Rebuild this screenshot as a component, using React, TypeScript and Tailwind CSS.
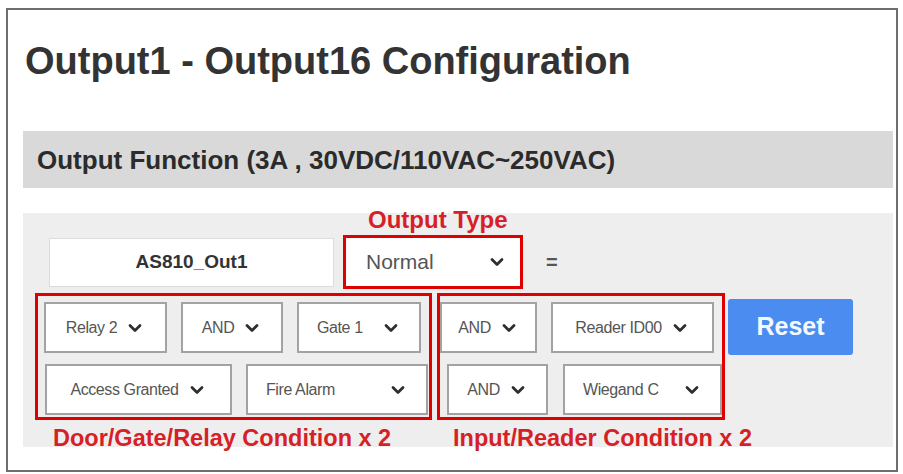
import { ChevronDown } from "lucide-react"

type Opt = { label: string; w: string; spread?: boolean }

const relayTop: Opt[] = [
  { label: "Relay 2", w: "w-[123px]" },
  { label: "AND", w: "w-[102px]" },
  { label: "Gate 1", w: "w-[124px]", spread: true },
]
const relayBottom: Opt[] = [
  { label: "Access Granted", w: "w-[187px]" },
  { label: "Fire Alarm", w: "w-[182px]", spread: true },
]
const readerTop: Opt[] = [
  { label: "AND", w: "w-[97px]" },
  { label: "Reader ID00", w: "w-[163px]" },
]
const readerBottom: Opt[] = [
  { label: "AND", w: "w-[101px]" },
  { label: "Wiegand C", w: "w-[159px]", spread: true },
]

function Caret() {
  return <ChevronDown size={20} strokeWidth={3.3} className="shrink-0 text-[#2e2e2e]" />
}

function Select({ opt }: { opt: Opt }) {
  return (
    <div
      className={`flex h-[51px] items-center border-2 border-[#a2a2a2] bg-white text-[16px] tracking-tight text-[#555] ${opt.w} ${
        opt.spread ? "justify-between px-[18px]" : "justify-center gap-2"
      }`}
    >
      <span className="whitespace-nowrap">{opt.label}</span>
      <Caret />
    </div>
  )
}

function Row({ items, className }: { items: Opt[]; className: string }) {
  return (
    <div className={`flex ${className}`}>
      {items.map((o, i) => (
        <Select key={i} opt={o} />
      ))}
    </div>
  )
}

function Note({ children, className }: { children: string; className: string }) {
  return (
    <span
      className={`absolute whitespace-nowrap leading-none font-bold text-[#d61f26] ${className}`}
    >
      {children}
    </span>
  )
}

export default function App() {
  return (
    <div className="min-h-[474px] bg-white pt-[8px] pl-[6px] font-['Liberation_Sans',Arial,sans-serif]">
      <div className="h-[464px] w-[892px] border-2 border-[#6e6e6e]">
        <h1 className="pt-[32px] pl-[17px] text-[38px] leading-none font-bold text-[#333]">
          Output1 - Output16 Configuration
        </h1>

        <div className="mt-[51px] ml-[15px] flex h-[57px] w-[870px] items-center bg-[#d9d9d9] pl-[14px]">
          <h2 className="text-[26px] leading-none font-bold text-[#2b2b2b]">
            Output Function (3A , 30VDC/110VAC~250VAC)
          </h2>
        </div>

        <div className="mt-[25px] ml-[15px] h-[234px] w-[870px] bg-[#eeeeee] px-3 pt-[22px]">
          {/* name + output type */}
          <div className="ml-[14px] flex items-center">
            <div className="flex h-[49px] w-[285px] items-center justify-center border border-[#dcdcdc] bg-white text-[19px] font-bold text-[#333]">
              AS810_Out1
            </div>
            <div className="relative ml-[9px] flex h-[54px] w-[180px] items-center justify-between border-[3px] border-[#e00000] bg-white pr-[13px] pl-[20px] text-[21px] text-[#555]">
              <Note className="bottom-full left-[22px] mb-[6px] text-[24px]">Output Type</Note>
              <span>Normal</span>
              <Caret />
            </div>
            <span className="ml-[23px] text-[20px] font-bold text-[#555]">=</span>
          </div>

          {/* conditions */}
          <div className="mt-[4px] flex items-start">
            <div className="relative h-[127px] w-[397px] border-[3px] border-[#e00000]">
              <Note className="top-full left-[15px] mt-[10px] text-[23.5px]">Door/Gate/Relay Condition x 2</Note>
              <Row items={relayTop} className="mt-[6px] ml-[6px] gap-[14px]" />
              <Row items={relayBottom} className="mt-[11px] ml-[7px] gap-[14px]" />
            </div>
            <div className="relative ml-[5px] h-[127px] w-[288px] border-[3px] border-[#e00000]">
              <Note className="top-full left-[13px] mt-[10px] text-[23.5px]">Input/Reader Condition x 2</Note>
              <Row items={readerTop} className="mt-[6px] gap-[14px]" />
              <Row items={readerBottom} className="mt-[11px] ml-[7px] gap-[15px]" />
            </div>
            <button className="mt-[6px] ml-[3px] h-[56px] w-[125px] rounded-[3px] bg-[#4a8cf0] text-[25px] font-bold text-[#f4f8ff]">
              Reset
            </button>
          </div>
        </div>
      </div>
    </div>
  )
}
